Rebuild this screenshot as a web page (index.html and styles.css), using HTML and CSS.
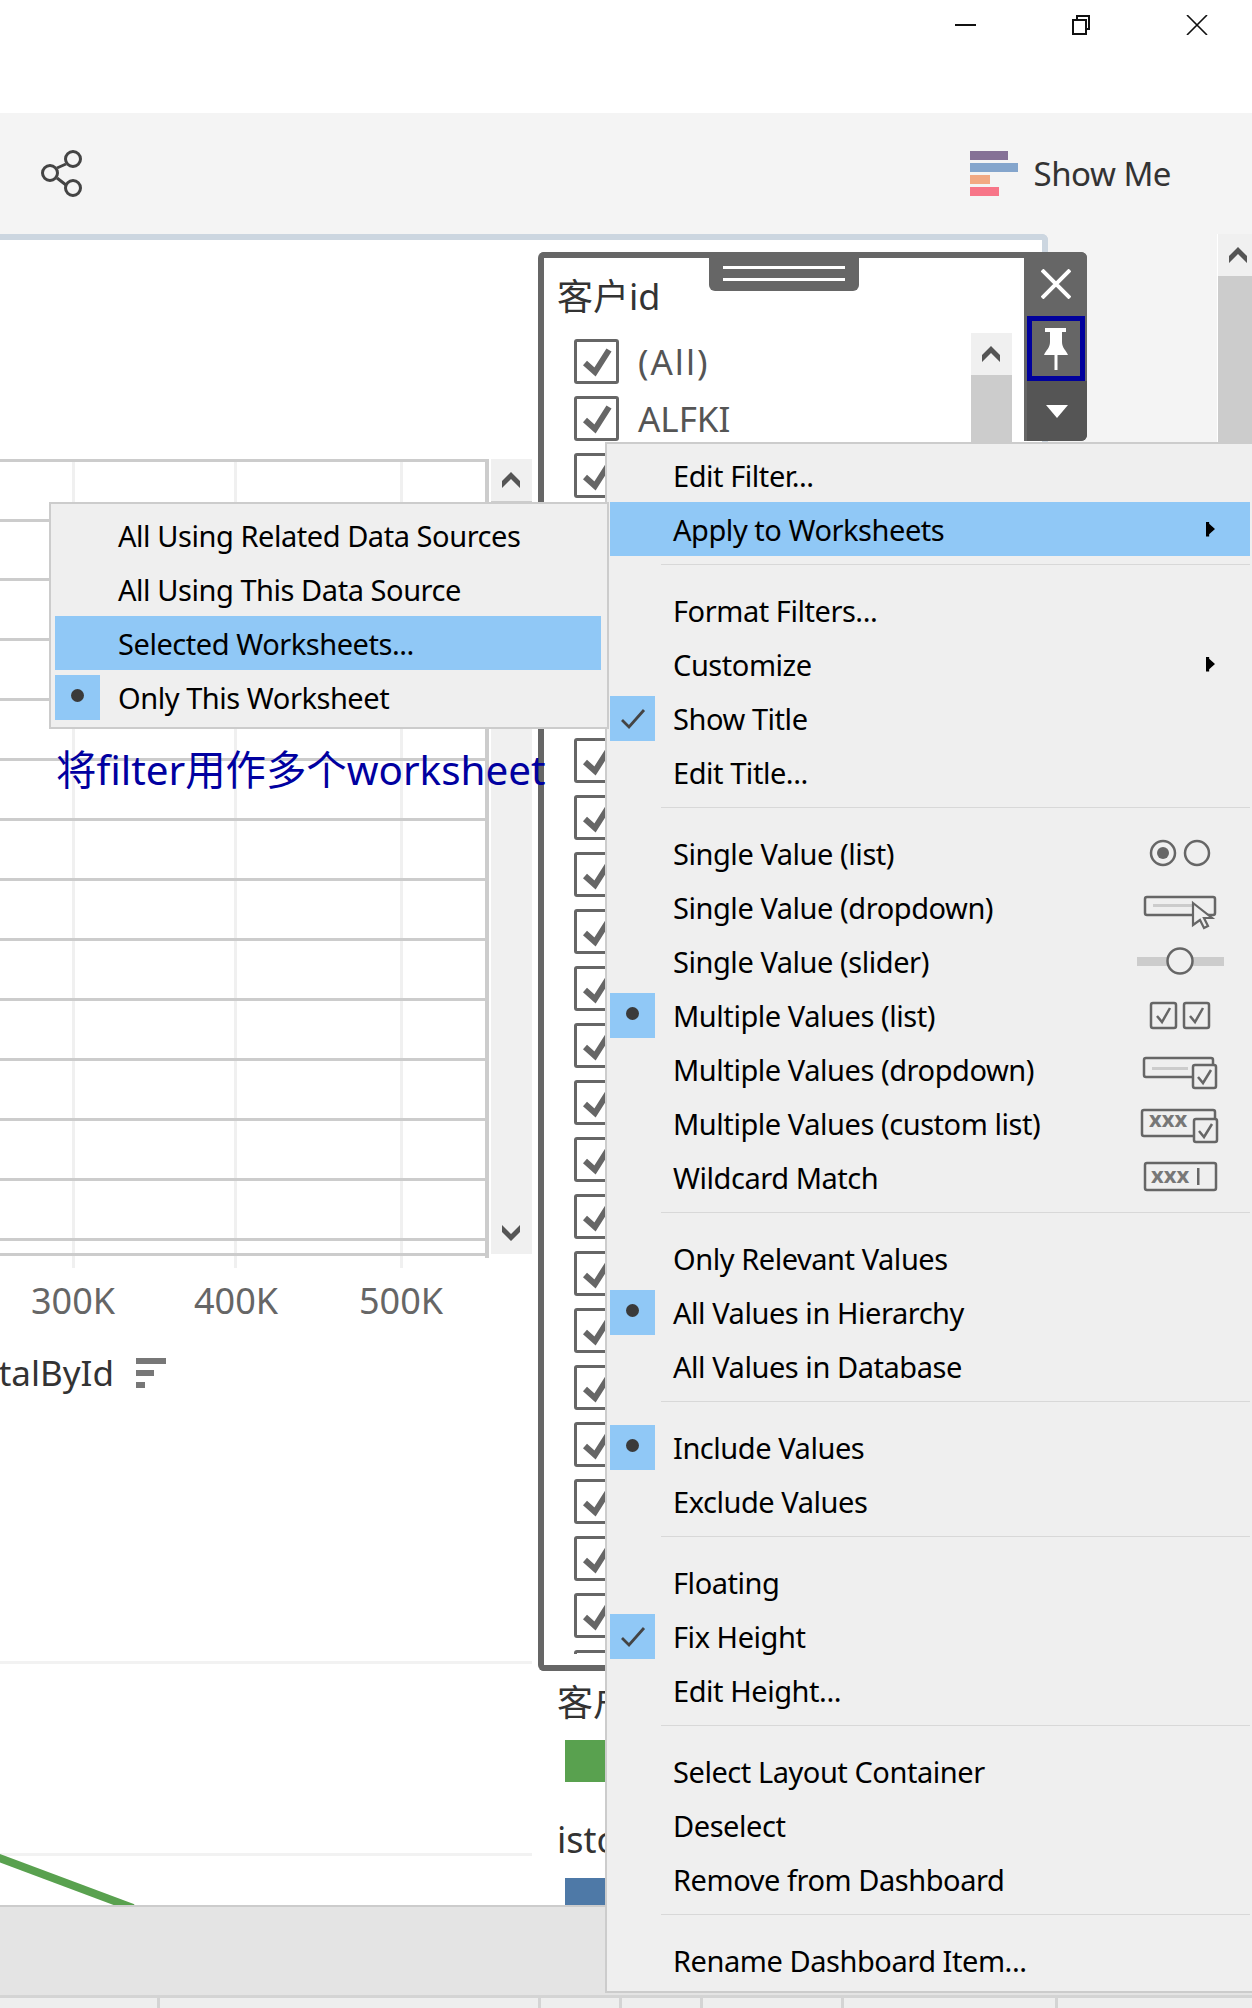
FILE: index.html
```html
<!DOCTYPE html>
<html lang="en">

<head>
    <meta charset="UTF-8">
    <title>Dashboard</title>
    <link rel="stylesheet" href="styles.css">
</head>

<body>
    <!-- shared shapes -->
    <svg class="defs" width="0" height="0">
        <symbol id="tick" viewBox="0 0 45 45">
            <path d="M11 24 L21 33 L35 11" fill="none" stroke="#666" stroke-width="6" />
        </symbol>
        <symbol id="chev" viewBox="0 0 18 16">
            <path d="M0 9 L9 0 L18 9 L18 16 L9 7 L0 16 Z" fill="#555" />
        </symbol>
        <symbol id="menu-check" viewBox="0 0 45 45">
            <path d="M12 24 L19 31 L34 14" fill="none" stroke="#444" stroke-width="2.8" />
        </symbol>
    </svg>

    <div class="titlebar">
        <svg class="win-icon" viewBox="0 0 22 20"><path d="M1 10 H22" stroke="#111" stroke-width="2" /></svg>
        <svg class="win-icon" viewBox="0 0 22 20">
            <path d="M7 4 V1 H19 V14 H16" fill="none" stroke="#111" stroke-width="2" />
            <rect x="3" y="5" width="13" height="14" fill="none" stroke="#111" stroke-width="2" />
        </svg>
        <svg class="win-icon" viewBox="0 0 22 20"><path d="M1 0 L21 20 M21 0 L1 20" stroke="#111" stroke-width="1.6" /></svg>
    </div>

    <div class="toolbar">
        <svg class="share" width="42" height="47" viewBox="0 0 42 47">
            <path d="M17 18 L26 14 M17 28 L26 35" stroke="#444" stroke-width="3" />
            <circle cx="33" cy="9" r="7.5" fill="none" stroke="#444" stroke-width="3" />
            <circle cx="10" cy="23" r="7.5" fill="none" stroke="#444" stroke-width="3" />
            <circle cx="33" cy="38" r="7.5" fill="none" stroke="#444" stroke-width="3" />
        </svg>
        <div class="show-me">
            <svg width="48" height="45" viewBox="0 0 48 45">
                <rect width="38" height="9" fill="#857196" />
                <rect y="12" width="48" height="9" fill="#84a5cc" />
                <rect y="24" width="20" height="9" fill="#f2a983" />
                <rect y="36" width="29" height="9" fill="#f77588" />
            </svg>
            <span>Show Me</span>
        </div>
    </div>

    <div class="workspace">
        <div class="sheet">
            <div class="sheet-left">
                <div class="chart-row">
                    <svg class="chart" width="491" height="871" viewBox="0 0 491 871">
                        <g fill="#f0f0f0">
                            <rect x="72" y="0" width="3" height="809" />
                            <rect x="234" y="0" width="3" height="809" />
                            <rect x="400" y="0" width="3" height="809" />
                        </g>
                        <g fill="#ccc">
                            <rect y="0" width="489" height="3" />
                            <rect y="60" width="486" height="3" />
                            <rect y="119" width="486" height="3" />
                            <rect y="179" width="486" height="3" />
                            <rect y="239" width="486" height="3" />
                            <rect y="299" width="486" height="3" />
                            <rect y="359" width="486" height="3" />
                            <rect y="419" width="486" height="3" />
                            <rect y="479" width="486" height="3" />
                            <rect y="539" width="486" height="3" />
                            <rect y="599" width="486" height="3" />
                            <rect y="659" width="486" height="3" />
                            <rect y="719" width="486" height="3" />
                            <rect y="779" width="486" height="3" />
                            <rect y="794" width="489" height="3" />
                            <rect x="485" y="0" width="4" height="799" />
                        </g>
                        <g class="tick-label">
                            <text x="73" y="855">300K</text>
                            <text x="236" y="855">400K</text>
                            <text x="401" y="855">500K</text>
                        </g>
                    </svg>
                    <div class="chart-scroll">
                        <button class="scroll-btn"><svg width="18" height="16"><use href="#chev" /></svg></button>
                        <div class="chart-thumb"></div>
                        <button class="scroll-btn"><svg class="flip" width="18" height="16"><use href="#chev" /></svg></button>
                    </div>
                </div>

                <div class="axis-title">
                    <span>talById</span>
                    <svg width="30" height="30" viewBox="0 0 30 30">
                        <rect width="30" height="6" fill="#777" />
                        <rect y="12" width="18" height="6" fill="#777" />
                        <rect y="24" width="9" height="6" fill="#777" />
                    </svg>
                </div>

                <div class="divider first"></div>
                <div class="divider second"></div>
                <svg class="trend" width="140" height="49" viewBox="0 0 140 49">
                    <path d="M-6 0 L133 52" fill="none" stroke="#59a14f" stroke-width="8" />
                </svg>
            </div>

            <div class="sheet-right">
                <div class="legend-title">客户</div>
                <div class="legend-swatch green"></div>
                <div class="legend-title next">isto</div>
                <div class="legend-swatch blue"></div>
            </div>
        </div>

        <div class="page-gap"></div>
        <div class="page-scroll">
            <button class="scroll-btn"><svg width="18" height="16"><use href="#chev" /></svg></button>
            <div class="thumb"></div>
        </div>
    </div>

    <div class="bottom-bar"></div>
    <div class="tabs">
        <div class="tab-cell w158"></div>
        <div class="tab-cell w381"></div>
        <div class="tab-cell w81"></div>
        <div class="tab-cell w81"></div>
        <div class="tab-cell w141"></div>
        <div class="tab-cell w213"></div>
    </div>

    <!-- filter card -->
    <div class="filter-card">
        <div class="filter-body">
            <div class="grip"><i></i><i></i></div>
            <h3 class="filter-title">客户id</h3>
            <div class="filter-list-wrap">
                <div class="filter-list">
                    <label class="filter-row"><span class="box"><svg><use href="#tick" /></svg></span><span class="all">(All)</span></label>
                    <label class="filter-row"><span class="box"><svg><use href="#tick" /></svg></span>ALFKI</label>
                    <label class="filter-row"><span class="box"><svg><use href="#tick" /></svg></span></label>
                    <label class="filter-row"><span class="box"><svg><use href="#tick" /></svg></span></label>
                    <label class="filter-row"><span class="box"><svg><use href="#tick" /></svg></span></label>
                    <label class="filter-row"><span class="box"><svg><use href="#tick" /></svg></span></label>
                    <label class="filter-row"><span class="box"><svg><use href="#tick" /></svg></span></label>
                    <label class="filter-row"><span class="box"><svg><use href="#tick" /></svg></span></label>
                    <label class="filter-row"><span class="box"><svg><use href="#tick" /></svg></span></label>
                    <label class="filter-row"><span class="box"><svg><use href="#tick" /></svg></span></label>
                    <label class="filter-row"><span class="box"><svg><use href="#tick" /></svg></span></label>
                    <label class="filter-row"><span class="box"><svg><use href="#tick" /></svg></span></label>
                    <label class="filter-row"><span class="box"><svg><use href="#tick" /></svg></span></label>
                    <label class="filter-row"><span class="box"><svg><use href="#tick" /></svg></span></label>
                    <label class="filter-row"><span class="box"><svg><use href="#tick" /></svg></span></label>
                    <label class="filter-row"><span class="box"><svg><use href="#tick" /></svg></span></label>
                    <label class="filter-row"><span class="box"><svg><use href="#tick" /></svg></span></label>
                    <label class="filter-row"><span class="box"><svg><use href="#tick" /></svg></span></label>
                    <label class="filter-row"><span class="box"><svg><use href="#tick" /></svg></span></label>
                    <label class="filter-row"><span class="box"><svg><use href="#tick" /></svg></span></label>
                    <label class="filter-row"><span class="box"><svg><use href="#tick" /></svg></span></label>
                    <label class="filter-row"><span class="box"><svg><use href="#tick" /></svg></span></label>
                    <label class="filter-row"><span class="box"><svg><use href="#tick" /></svg></span></label>
                    <label class="filter-row"><span class="box"><svg><use href="#tick" /></svg></span></label>
                </div>
                <div class="filter-scroll">
                    <button class="scroll-btn"><svg width="18" height="16"><use href="#chev" /></svg></button>
                    <div class="thumb"></div>
                </div>
            </div>
        </div>
        <div class="filter-tools">
            <div class="tool close">
                <svg width="30" height="30" viewBox="0 0 30 30"><path d="M1 1 L29 29 M29 1 L1 29" stroke="#fff" stroke-width="4" /></svg>
            </div>
            <div class="tool pin">
                <svg width="24" height="42" viewBox="0 0 24 42">
                    <path d="M1 0 H22 V4 H18 V14 C18 20 22 22 24 27 H13.5 V42 H10.5 V27 H0 C2 22 6 20 6 14 V4 H1 Z" fill="#fff" />
                </svg>
            </div>
            <div class="tool more">
                <svg width="22" height="13" viewBox="0 0 22 13"><path d="M0 0 H22 L11 13 Z" fill="#fff" /></svg>
            </div>
        </div>
    </div>

    <!-- main context menu -->
    <div class="menu menu-main">
        <div class="item"><span class="mark"></span><span>Edit Filter...</span></div>
        <div class="item on"><span class="mark"></span><span>Apply to Worksheets</span><span class="arrow"></span></div>
        <div class="sep"></div>
        <div class="item"><span class="mark"></span><span>Format Filters...</span></div>
        <div class="item"><span class="mark"></span><span>Customize</span><span class="arrow"></span></div>
        <div class="item"><span class="mark set"><svg width="45" height="45"><use href="#menu-check" /></svg></span><span>Show Title</span></div>
        <div class="item"><span class="mark"></span><span>Edit Title...</span></div>
        <div class="sep"></div>

        <div class="item"><span class="mark"></span><span>Single Value (list)</span>
            <svg class="kind" viewBox="0 0 90 54">
                <circle cx="28" cy="27" r="12" fill="none" stroke="#666" stroke-width="2.5" />
                <circle cx="28" cy="27" r="6" fill="#666" />
                <circle cx="62" cy="27" r="12" fill="none" stroke="#666" stroke-width="2.5" />
            </svg>
        </div>
        <div class="item"><span class="mark"></span><span>Single Value (dropdown)</span>
            <svg class="kind" viewBox="0 0 90 54">
                <rect x="10" y="17" width="70" height="18" rx="2" fill="none" stroke="#666" stroke-width="2.5" />
                <rect x="18" y="24" width="40" height="3" fill="#ccc" />
                <path d="M58 23 L77 38 L69 38 L73 46 L69 48 L65 40 L58 45 Z" fill="#efefef" stroke="#666" stroke-width="2.2" />
            </svg>
        </div>
        <div class="item"><span class="mark"></span><span>Single Value (slider)</span>
            <svg class="kind" viewBox="0 0 90 54">
                <rect x="2" y="23" width="87" height="9" fill="#ccc" />
                <circle cx="45" cy="27" r="12.5" fill="#efefef" stroke="#666" stroke-width="2.5" />
            </svg>
        </div>
        <div class="item"><span class="mark dot"></span><span>Multiple Values (list)</span>
            <svg class="kind" viewBox="0 0 90 54">
                <rect x="16" y="15" width="25" height="25" rx="2" fill="none" stroke="#666" stroke-width="2.5" />
                <path d="M22 28 L27 34 L35 20" fill="none" stroke="#666" stroke-width="2.5" />
                <rect x="49" y="15" width="25" height="25" rx="2" fill="none" stroke="#666" stroke-width="2.5" />
                <path d="M55 28 L60 34 L68 20" fill="none" stroke="#666" stroke-width="2.5" />
            </svg>
        </div>
        <div class="item"><span class="mark"></span><span>Multiple Values (dropdown)</span>
            <svg class="kind" viewBox="0 0 90 54">
                <rect x="9" y="16" width="69" height="19" rx="2" fill="none" stroke="#666" stroke-width="2.5" />
                <rect x="17" y="25" width="36" height="3" fill="#ccc" />
                <rect x="58" y="23" width="23" height="23" rx="2" fill="#efefef" stroke="#666" stroke-width="2.5" />
                <path d="M63 35 L68 41 L76 28" fill="none" stroke="#666" stroke-width="2.5" />
            </svg>
        </div>
        <div class="item"><span class="mark"></span><span>Multiple Values (custom list)</span>
            <svg class="kind" viewBox="0 0 90 54">
                <rect x="7" y="14" width="73" height="26" rx="2" fill="none" stroke="#666" stroke-width="2.5" />
                <text class="kind-text" x="14" y="31">xxx</text>
                <rect x="59" y="23" width="23" height="23" rx="2" fill="#efefef" stroke="#666" stroke-width="2.5" />
                <path d="M64 35 L69 41 L77 28" fill="none" stroke="#666" stroke-width="2.5" />
            </svg>
        </div>
        <div class="item"><span class="mark"></span><span>Wildcard Match</span>
            <svg class="kind" viewBox="0 0 90 54">
                <rect x="10" y="13" width="71" height="27" rx="2" fill="none" stroke="#666" stroke-width="2.5" />
                <text class="kind-text" x="16" y="33">xxx</text>
                <rect x="62" y="18" width="2.5" height="17" fill="#666" />
            </svg>
        </div>
        <div class="sep"></div>

        <div class="item"><span class="mark"></span><span>Only Relevant Values</span></div>
        <div class="item"><span class="mark dot"></span><span>All Values in Hierarchy</span></div>
        <div class="item"><span class="mark"></span><span>All Values in Database</span></div>
        <div class="sep"></div>

        <div class="item"><span class="mark dot"></span><span>Include Values</span></div>
        <div class="item"><span class="mark"></span><span>Exclude Values</span></div>
        <div class="sep"></div>

        <div class="item"><span class="mark"></span><span>Floating</span></div>
        <div class="item"><span class="mark set"><svg width="45" height="45"><use href="#menu-check" /></svg></span><span>Fix Height</span></div>
        <div class="item"><span class="mark"></span><span>Edit Height...</span></div>
        <div class="sep"></div>

        <div class="item"><span class="mark"></span><span>Select Layout Container</span></div>
        <div class="item"><span class="mark"></span><span>Deselect</span></div>
        <div class="item"><span class="mark"></span><span>Remove from Dashboard</span></div>
        <div class="sep"></div>

        <div class="item"><span class="mark"></span><span>Rename Dashboard Item...</span></div>
    </div>

    <!-- submenu -->
    <div class="menu menu-sub">
        <div class="item"><span class="mark"></span><span>All Using Related Data Sources</span></div>
        <div class="item"><span class="mark"></span><span>All Using This Data Source</span></div>
        <div class="item on"><span class="mark"></span><span>Selected Worksheets...</span></div>
        <div class="item"><span class="mark dot"></span><span>Only This Worksheet</span></div>
    </div>

    <div class="note">将filter用作多个worksheet</div>
</body>

</html>
```

FILE: styles.css
```css
* {
    box-sizing: border-box;
}

body {
    position: relative;
    display: flex;
    flex-direction: column;
    width: 1252px;
    height: 2008px;
    margin: 0;
    overflow: hidden;
    background-color: #fff;
    font-family: "Noto Sans", "Noto Sans CJK SC", sans-serif;
}

.defs {
    position: absolute;
}

button {
    padding: 0;
    border: none;
    background: none;
}

/* window + toolbar */
.titlebar {
    display: flex;
    justify-content: flex-end;
    gap: 94px;
    height: 113px;
    padding: 15px 44px 0 0;
}

.win-icon {
    width: 22px;
    height: 20px;
}

.toolbar {
    display: flex;
    align-items: center;
    justify-content: space-between;
    height: 121px;
    padding: 0 81px 0 40px;
    background-color: #f4f4f4;
}

.show-me {
    display: flex;
    align-items: center;
    gap: 16px;
    font-size: 33px;
    letter-spacing: -0.5px;
    color: #333;
}

/* workspace */
.workspace {
    display: flex;
    height: 1671px;
    background-color: #f4f4f4;
}

.sheet {
    display: flex;
    width: 1048px;
    overflow: hidden;
    border-top: 6px solid #ccd6e0;
    border-right: 6px solid #ccd6e0;
    border-top-right-radius: 6px;
    background-color: #fff;
}

.page-gap {
    width: 169px;
}

.page-scroll {
    width: 35px;
    border-left: 1px solid #fff;
}

.page-scroll .scroll-btn {
    padding-left: 5px;
}

.thumb {
    height: 400px;
    background-color: #ccc;
}

.scroll-btn {
    display: flex;
    align-items: center;
    justify-content: center;
    width: 100%;
    height: 42px;
    background-color: #f0f0f0;
}

.flip {
    transform: rotate(180deg);
}

.sheet-left {
    flex: none;
    width: 532px;
    padding-top: 219px;
}

.chart-row {
    display: flex;
    align-items: flex-start;
}

.tick-label {
    font-size: 36px;
    text-anchor: middle;
    fill: #666;
}

.chart-scroll {
    display: flex;
    flex-direction: column;
    width: 41px;
    height: 795px;
    background-color: #f0f0f0;
}

.chart-scroll .scroll-btn {
    padding-right: 2px;
}

.chart-thumb {
    flex: 1;
    background: linear-gradient(#ccc 0 40px, #f0f0f0 40px);
}

.axis-title {
    display: flex;
    align-items: center;
    justify-content: flex-end;
    gap: 22px;
    width: 166px;
    height: 50px;
    margin-top: 17px;
    overflow: hidden;
    font-size: 35px;
    white-space: nowrap;
    color: #333;
}

.axis-title span {
    flex: none;
}

.axis-title svg {
    flex: none;
    margin: 2px 0 0;
}

.divider {
    height: 3px;
    background-color: #f2f2f2;
}

.divider.first {
    margin-top: 264px;
}

.divider.second {
    margin-top: 189px;
}

.trend {
    display: block;
    overflow: visible;
}

.sheet-right {
    flex: 1;
    padding: 1438px 0 0 25px;
}

.legend-title {
    height: 50px;
    font-size: 36px;
    line-height: 50px;
    color: #333;
}

.legend-title.next {
    margin-top: 33px;
}

.legend-swatch {
    width: 100px;
    margin: 12px 0 0 8px;
}

.legend-swatch.green {
    height: 42px;
    background-color: #59a14f;
}

.legend-swatch.blue {
    height: 40px;
    margin-top: 13px;
    background-color: #4e79a7;
}

/* bottom */
.bottom-bar {
    height: 93px;
    border-top: 2px solid #ccc;
    border-bottom: 3px solid #d4d4d4;
    background-color: #e4e4e4;
}

.tabs {
    display: flex;
    height: 10px;
    background-color: #eee;
}

.tab-cell {
    border-right: 3px solid #d4d4d4;
}

.w158 { width: 160px; }
.w381 { width: 381px; }
.w81 { width: 81px; }
.w141 { width: 141px; }
.w213 { width: 214px; }

/* filter card */
.filter-card {
    position: absolute;
    top: 252px;
    left: 538px;
    display: flex;
    width: 549px;
    height: 1419px;
    border: solid #666;
    border-width: 6px 0 6px 6px;
    border-radius: 6px;
}

.filter-body {
    position: relative;
    flex: none;
    width: 480px;
    padding-top: 14px;
    background-color: #fff;
}

.grip {
    position: absolute;
    top: 0;
    left: 165px;
    width: 150px;
    height: 33px;
    padding: 8px 14px 0;
    border-radius: 0 0 6px 6px;
    background-color: #666;
}

.grip i {
    display: block;
    height: 3px;
    margin-bottom: 9px;
    background-color: #fff;
}

.filter-title {
    height: 50px;
    margin: 0 0 11px;
    padding-left: 13px;
    font-size: 36px;
    font-weight: normal;
    line-height: 50px;
    color: #333;
}

.filter-list-wrap {
    display: flex;
}

.filter-list {
    flex: none;
    width: 427px;
    height: 1321px;
    padding: 6px 0 0 30px;
    overflow: hidden;
}

.filter-row {
    display: flex;
    align-items: center;
    gap: 19px;
    height: 45px;
    margin-bottom: 12px;
    font-size: 35px;
    color: #555;
}

.all {
    letter-spacing: 2px;
}

.box {
    flex: none;
    width: 45px;
    height: 45px;
    border: 3px solid #666;
    border-radius: 3px;
}

.box svg {
    display: block;
    width: 45px;
    height: 45px;
    margin: -3px;
}

.filter-scroll {
    width: 41px;
}

.filter-scroll .scroll-btn {
    padding-right: 2px;
}

.filter-tools {
    flex: none;
    width: 63px;
    height: 189px;
    margin-top: -6px;
    border-radius: 0 6px 6px 0;
    background-color: #666;
}

.tool {
    display: flex;
    align-items: center;
    justify-content: center;
}

.tool.close {
    height: 64px;
}

.tool.pin {
    width: 58px;
    height: 65px;
    margin-left: 3px;
    border: 5px solid #00009c;
}

.tool.more {
    height: 60px;
    margin-left: 3px;
    border-bottom-right-radius: 6px;
    background-color: #555;
}

/* menus */
.menu {
    position: absolute;
    border: 2px solid #ccc;
    background-color: #efefef;
    font-size: 29px;
    letter-spacing: -0.45px;
    color: #000;
}

.menu-main {
    top: 442px;
    left: 605px;
    width: 647px;
    padding: 4px 2px 4px 3px;
    border-right: none;
}

.menu-sub {
    top: 502px;
    left: 49px;
    width: 560px;
    padding: 4px 6px 3px 4px;
}

.item {
    display: flex;
    align-items: center;
    height: 54px;
    white-space: nowrap;
}

.item.on {
    background-color: #90c8f6;
}

.mark {
    display: flex;
    flex: none;
    align-items: center;
    justify-content: center;
    width: 45px;
    height: 45px;
    margin-right: 18px;
}

.mark.set,
.mark.dot {
    background-color: #90c8f6;
}

.mark.dot::before {
    content: "";
    width: 13px;
    height: 13px;
    margin-bottom: 3px;
    border-radius: 50%;
    background-color: #3a3a3a;
}

.arrow {
    width: 9px;
    height: 15px;
    margin: 0 35px 0 auto;
    background-color: #000;
    clip-path: polygon(0 0, 35% 0, 35% 15%, 100% 50%, 35% 85%, 35% 100%, 0 100%);
}

.sep {
    height: 1px;
    margin: 8px 0 18px 51px;
    background-color: #d8d8d8;
}

.kind {
    flex: none;
    width: 90px;
    height: 54px;
    margin: 0 25px 0 auto;
}

.kind-text {
    font-size: 22px;
    font-weight: bold;
    letter-spacing: 0;
    fill: #777;
}

.note {
    position: absolute;
    top: 742px;
    left: 56px;
    font-size: 40.4px;
    line-height: 56px;
    white-space: nowrap;
    color: #0000a0;
}
```
